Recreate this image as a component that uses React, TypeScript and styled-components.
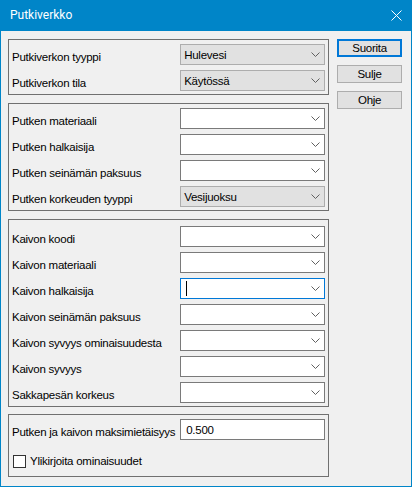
import React from 'react';
import styled, { createGlobalStyle, css } from 'styled-components';

const GlobalStyle = createGlobalStyle`
  html, body {
    margin: 0;
    padding: 0;
    background: #ffffff;
  }
  body {
    font-family: 'Microsoft Sans Serif', 'Liberation Sans', Arial, sans-serif;
    font-size: 11.5px;
    letter-spacing: -0.25px;
    color: #000000;
  }
  * {
    box-sizing: border-box;
  }
`;

const Window = styled.div`
  width: 412px;
  height: 487px;
  border: 1px solid #0085c8;
  border-top: none;
  display: flex;
  flex-direction: column;
  background: #f0f0f0;
`;

const TitleBar = styled.div`
  height: 31px;
  flex: none;
  background: #0085c8;
  color: #ffffff;
  display: flex;
  align-items: center;
  justify-content: space-between;
  padding: 0 9px 1px 9px;
  font-family: 'Segoe UI', Roboto, sans-serif;
  font-size: 12px;
  letter-spacing: 0;
`;

const CloseButton = styled.div`
  width: 12px;
  height: 12px;
  display: flex;
  align-items: center;
  justify-content: center;
  margin-top: 1px;
`;

const Client = styled.div`
  flex: 1;
  display: flex;
  gap: 8px;
  padding: 8px 9px 0 7px;
`;

const LeftColumn = styled.div`
  width: 322px;
  display: flex;
  flex-direction: column;
`;

const Group = styled.div<{ $pt?: number; $pb?: number; $mb?: number }>`
  border: 1px solid #707070;
  padding: ${({ $pt = 4 }) => $pt}px 3px ${({ $pb = 3 }) => $pb}px 3px;
  margin-bottom: ${({ $mb = 8 }) => $mb}px;
  display: flex;
  flex-direction: column;
  gap: 5px;
`;

const Row = styled.div`
  display: flex;
  align-items: flex-end;
  justify-content: space-between;
  height: 21px;
`;

const Label = styled.div`
  line-height: 15px;
  white-space: nowrap;
`;

const Combo = styled.div<{ $readOnly?: boolean; $focused?: boolean }>`
  width: 145px;
  height: 21px;
  display: flex;
  align-items: center;
  justify-content: space-between;
  padding: 0 4px 0 3px;
  background: #ffffff;
  border: 1px solid #7a7a7a;
  ${({ $readOnly }) =>
    $readOnly &&
    css`
      background: #e1e1e1;
      border-color: #adadad;
    `}
  ${({ $focused }) =>
    $focused &&
    css`
      border-color: #0078d7;
    `}
`;

const ComboText = styled.span`
  line-height: 16px;
`;

const Caret = styled.span`
  display: block;
  width: 1px;
  height: 15px;
  margin-left: 2px;
  background: #000000;
`;

const TextBox = styled.div`
  width: 145px;
  height: 21px;
  display: flex;
  align-items: center;
  padding: 0 5px;
  background: #ffffff;
  border: 1px solid #7a7a7a;
`;

const CheckRow = styled.div`
  display: flex;
  align-items: center;
  gap: 4px;
  height: 13px;
  margin-top: 10px;
  padding-left: 1px;
`;

const CheckBox = styled.span`
  width: 13px;
  height: 13px;
  border: 1px solid #333333;
  background: #ffffff;
  flex: none;
`;

const ButtonColumn = styled.div`
  width: 65px;
  display: flex;
  flex-direction: column;
  gap: 8px;
`;

const Button = styled.div<{ $default?: boolean }>`
  height: 18px;
  display: flex;
  align-items: center;
  justify-content: center;
  background: #e1e1e1;
  border: 1px solid #adadad;
  line-height: 14px;
  ${({ $default }) =>
    $default &&
    css`
      border-color: #0078d7;
      box-shadow: inset 0 0 0 1px #0078d7;
    `}
`;

const Chevron = () => (
  <svg width="9" height="5" viewBox="0 0 9 5">
    <polyline points="0.5,0.5 4.5,4.5 8.5,0.5" fill="none" stroke="#606060" strokeWidth="1" />
  </svg>
);

type ComboProps = { value?: string; readOnly?: boolean; focused?: boolean };

const Dropdown = ({ value, readOnly, focused }: ComboProps) => (
  <Combo $readOnly={readOnly} $focused={focused}>
    {focused ? <Caret /> : <ComboText>{value}</ComboText>}
    <Chevron />
  </Combo>
);

const putkiRows: { label: string; value?: string; readOnly?: boolean }[] = [
  { label: 'Putken materiaali' },
  { label: 'Putken halkaisija' },
  { label: 'Putken seinämän paksuus' },
  { label: 'Putken korkeuden tyyppi', value: 'Vesijuoksu', readOnly: true },
];

const kaivoRows: { label: string; focused?: boolean }[] = [
  { label: 'Kaivon koodi' },
  { label: 'Kaivon materiaali' },
  { label: 'Kaivon halkaisija', focused: true },
  { label: 'Kaivon seinämän paksuus' },
  { label: 'Kaivon syvyys ominaisuudesta' },
  { label: 'Kaivon syvyys' },
  { label: 'Sakkapesän korkeus' },
];

const App = () => {
  return (
    <>
      <GlobalStyle />
      <Window>
        <TitleBar>
          <span>Putkiverkko</span>
          <CloseButton>
            <svg width="11" height="11" viewBox="0 0 11 11">
              <path d="M0.5 0.5 L10.5 10.5 M10.5 0.5 L0.5 10.5" stroke="#ffffff" strokeWidth="1" />
            </svg>
          </CloseButton>
        </TitleBar>
        <Client>
          <LeftColumn>
            <Group>
              <Row>
                <Label>Putkiverkon tyyppi</Label>
                <Dropdown value="Hulevesi" readOnly />
              </Row>
              <Row>
                <Label>Putkiverkon tila</Label>
                <Dropdown value="Käytössä" readOnly />
              </Row>
            </Group>
            <Group>
              {putkiRows.map((r) => (
                <Row key={r.label}>
                  <Label>{r.label}</Label>
                  <Dropdown value={r.value} readOnly={r.readOnly} />
                </Row>
              ))}
            </Group>
            <Group $pt={6} $mb={7}>
              {kaivoRows.map((r) => (
                <Row key={r.label}>
                  <Label>{r.label}</Label>
                  <Dropdown focused={r.focused} />
                </Row>
              ))}
            </Group>
            <Group $pb={8} $mb={0}>
              <Row>
                <Label>Putken ja kaivon maksimietäisyys</Label>
                <TextBox>0.500</TextBox>
              </Row>
              <CheckRow>
                <CheckBox />
                <Label>Ylikirjoita ominaisuudet</Label>
              </CheckRow>
            </Group>
          </LeftColumn>
          <ButtonColumn>
            <Button $default>Suorita</Button>
            <Button>Sulje</Button>
            <Button>Ohje</Button>
          </ButtonColumn>
        </Client>
      </Window>
    </>
  );
};

export default App;
